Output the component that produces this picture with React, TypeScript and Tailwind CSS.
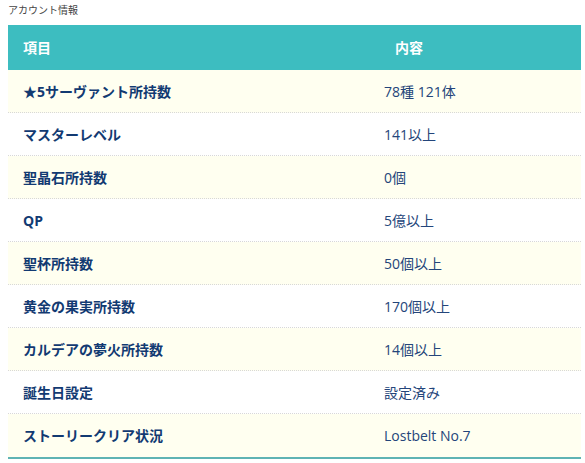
const ROWS = [
  { label: "★5サーヴァント所持数", value: "78種 121体" },
  { label: "マスターレベル", value: "141以上" },
  { label: "聖晶石所持数", value: "0個" },
  { label: "QP", value: "5億以上" },
  { label: "聖杯所持数", value: "50個以上" },
  { label: "黄金の果実所持数", value: "170個以上" },
  { label: "カルデアの夢火所持数", value: "14個以上" },
  { label: "誕生日設定", value: "設定済み" },
  { label: "ストーリークリア状況", value: "Lostbelt No.7" },
];

export default function App() {
  return (
    <div
      className="w-[585px] h-[463px] bg-white overflow-hidden"
      style={{ fontFamily: '"Open Sans", "Noto Sans CJK JP", sans-serif' }}
    >
      <div className="h-[25px] pl-[8px] pt-[3px] text-[10px] leading-[14px] text-[#444]">
        アカウント情報
      </div>
      <div className="ml-[8px] w-[573px] border-b-2 border-[#5fb4b4]">
        <div className="flex h-[45px] items-center bg-[#3dbdc0] text-[14px] font-bold text-white">
          <div className="w-[376px] pl-[15px]">項目</div>
          <div className="flex-1 pl-[11px]">内容</div>
        </div>
        {ROWS.map((row, i) => (
          <div
            key={row.label}
            className={`flex h-[43px] items-center ${
              i % 2 === 0 ? "bg-[#fffff0]" : "bg-white"
            } ${i < ROWS.length - 1 ? "border-b border-dotted border-[#d8d8d8]" : ""}`}
          >
            <div className="w-[376px] pl-[15px] text-[14px] font-bold text-[#123a72]">
              {row.label}
            </div>
            <div className="flex-1 text-[14px] text-[#24457a]">{row.value}</div>
          </div>
        ))}
      </div>
    </div>
  );
}
